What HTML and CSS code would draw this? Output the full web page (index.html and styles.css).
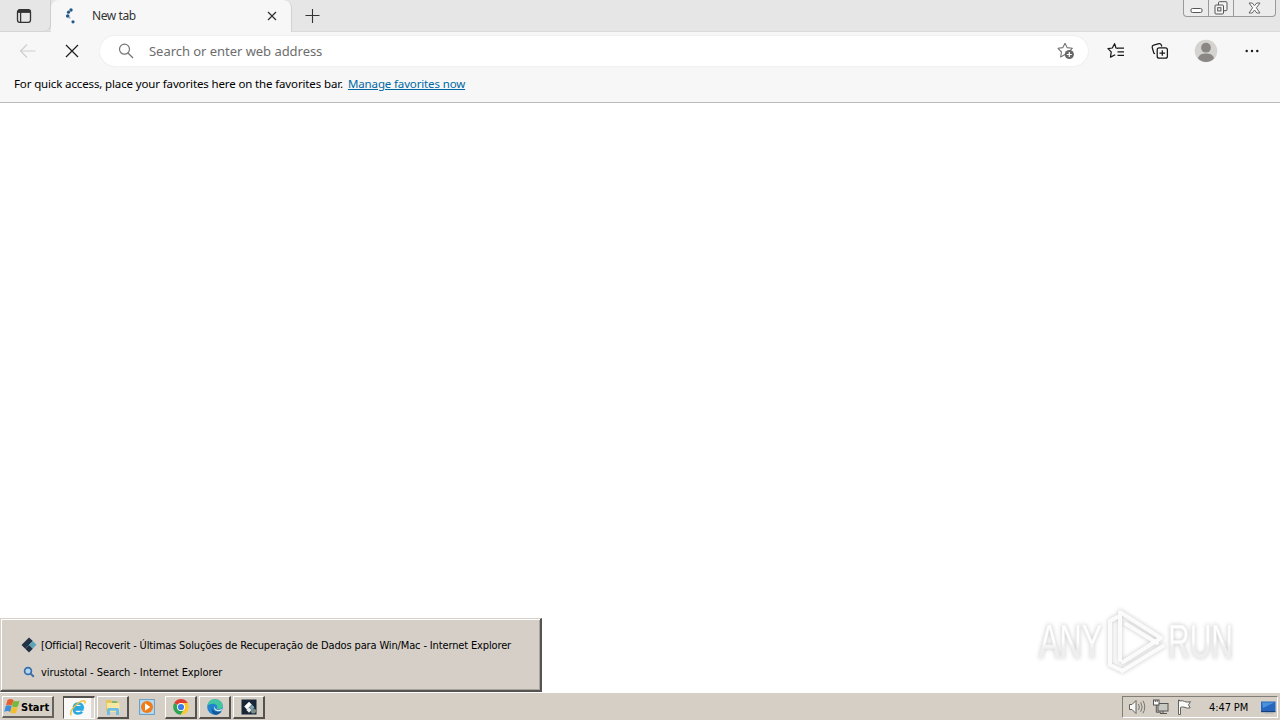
FILE: index.html
```html
<!DOCTYPE html>
<html lang="en">
<head>
<meta charset="utf-8">
<title>New tab</title>
<link rel="stylesheet" href="styles.css">
</head>
<body>
<div class="desktop">
  <header class="tabstrip">
    <div class="tab-actions">
      <svg width="16" height="16" viewBox="0 0 16 16" fill="none" stroke="#333" stroke-width="1.3"><rect x="1.5" y="1.7" width="13" height="12.6" rx="2.2"/><path d="M2 3.4h12" stroke-width="3"/><path d="M4.6 4v10"/></svg>
    </div>
    <div class="tab">
      <svg class="spinner" width="14" height="18" viewBox="0 0 14 18" fill="#235987"><circle cx="6" cy="3" r="1.7"/><circle cx="3.5" cy="5.2" r="1.6"/><circle cx="2.7" cy="9" r="1.8"/><circle cx="4.5" cy="10.7" r="1" fill="#8ba9c2"/><circle cx="8" cy="14.8" r="1.6"/></svg>
      <span class="tab-title">New tab</span>
      <svg class="tab-close" width="10" height="10" viewBox="0 0 10 10" fill="none" stroke="#333" stroke-width="1.3"><path d="M1 1l8 8M9 1L1 9"/></svg>
    </div>
    <svg class="new-tab" width="16" height="16" viewBox="0 0 16 16" fill="none" stroke="#333" stroke-width="1.1"><path d="M.5 7.5h14M7.5 1v14"/></svg>
    <div class="window-buttons">
      <span class="wb wb-min"><svg width="13" height="7" viewBox="0 0 13 7"><rect x="1" y="1.5" width="11" height="4" rx="1.4" fill="#fff" stroke="#555"/></svg></span>
      <span class="wb wb-max"><svg width="14" height="14" viewBox="0 0 14 14" fill="#f4f4f4" stroke="#555"><rect x="4.5" y=".7" width="8.5" height="9" rx="1"/><rect x="1" y="4" width="8.5" height="9" rx="1"/><rect x="3.7" y="6.7" width="3.2" height="3.2"/></svg></span>
      <span class="wb wb-close"><svg width="13" height="12" viewBox="0 0 13 12"><path d="M1 1h3.2l2.3 2.7L8.8 1H12L8.4 5.8 12 11H8.8L6.5 8 4.2 11H1l3.6-5.2z" fill="#fafafa" stroke="#666"/></svg></span>
    </div>
  </header>

  <section class="chrome">
    <div class="toolbar">
      <svg class="back" width="18" height="16" viewBox="0 0 18 16" fill="none" stroke="#cfcfcf" stroke-width="1.2"><path d="M16.5 8h-15M8 1.5L1.5 8 8 14.5"/></svg>
      <svg class="stop" width="14" height="14" viewBox="0 0 14 14" fill="none" stroke="#1c1c1c" stroke-width="1.2"><path d="M1 1l12 12M13 1L1 13"/></svg>
      <div class="address">
        <svg width="16" height="16" viewBox="0 0 16 16" fill="none" stroke="#757575" stroke-width="1.2"><circle cx="6.5" cy="6.2" r="5"/><path d="M10 10l5 5"/></svg>
        <span class="placeholder">Search or enter web address</span>
        <svg class="add-fav" width="18" height="18" viewBox="0 0 18 18"><path d="M8 1.2l2.1 4.4 5.2.7-3.6 3.5M8 12.5L3.6 15l.9-5L1 6.3l4.9-.7L8 1.2" fill="none" stroke="#747474" stroke-width="1.1" stroke-linejoin="round"/><circle cx="12.3" cy="12.5" r="4.6" fill="#666"/><path d="M12.3 10v5M9.8 12.5h5" stroke="#fff" stroke-width="1.2"/></svg>
      </div>
      <div class="tools">
        <svg width="18" height="18" viewBox="0 0 18 18" fill="none" stroke="#181818" stroke-width="1.25" stroke-linejoin="round"><path d="M11 6.3L9 6 7.6 1.7 5.3 6 1 6.6l3.2 3.3-.7 5.2 4.7-2.3"/><path d="M10.5 6.2H17M10.5 9.8H17M10.5 13.3H17"/></svg>
        <svg width="18" height="18" viewBox="0 0 18 18" fill="none" stroke="#181818" stroke-width="1.25" stroke-linejoin="round"><path d="M4 11.8l-1.1-.6L1.2 5.5Q.9 3.6 2.6 3.2L8 1.6q1.6-.3 2.3 1.3l.5 1.6"/><rect x="6.2" y="5.8" width="10.2" height="10.4" rx="2"/><path d="M11.3 8.2v5.6M8.5 11h5.6"/></svg>
        <svg class="avatar" width="24" height="24" viewBox="0 0 24 24"><circle cx="12" cy="12" r="11.3" fill="#d5d3d0"/><circle cx="12" cy="8.7" r="4.9" fill="#8b8784"/><path d="M4 19.5C5 15.7 8 14.6 12 14.6s7 1.1 8 4.9A11 11 0 0 1 12 23a11 11 0 0 1-8-3.5z" fill="#8b8784"/></svg>
        <svg width="16" height="4" viewBox="0 0 16 4" fill="#181818"><circle cx="2.7" cy="2" r="1.2"/><circle cx="8" cy="2" r="1.2"/><circle cx="13.3" cy="2" r="1.2"/></svg>
      </div>
    </div>
    <div class="favorites">
      <span class="fav-text">For quick access, place your favorites here on the favorites bar.</span>
      <a class="fav-link">Manage favorites now</a>
    </div>
  </section>

  <main class="page"></main>

  <div class="watermark">
    <svg width="214" height="72" viewBox="0 0 214 72">
      <defs><linearGradient id="fade" x1="0" y1="0" x2="0" y2="1"><stop offset=".5" stop-color="#fff"/><stop offset=".62" stop-color="#eee"/></linearGradient></defs>
      <g class="mark-text" fill="url(#fade)"><text transform="translate(5 53) scale(.64 1)">ANY</text><text transform="translate(134 53) scale(.625 1)">RUN</text></g>
      <g class="mark-play"><path d="M83 12l-7 4v44l11 5"/><path d="M86 55V7l41 26-38 24"/><path d="M92 19l31 19M88 66l41-25"/></g>
    </svg>
  </div>

  <div class="window-list">
    <div class="window-item">
      <svg width="16" height="16" viewBox="0 0 16 16"><path d="M8 .5L.5 8l3.7 3.7L11.8 4z" fill="#213244"/><path d="M11.8 4l3.7 3.8-3.7 3.8L8 8z" fill="#5ba5b8"/><path d="M8 8l3.8 3.8L8 15.5l-3.8-3.8z" fill="#203044"/></svg>
      <span class="item-official">[Official] Recoverit - Últimas Soluções de Recuperação de Dados para Win/Mac - Internet Explorer</span>
    </div>
    <div class="window-item">
      <svg width="16" height="16" viewBox="0 0 16 16" fill="#b5d5ef" stroke="#356fa8" stroke-width="1.7"><circle cx="7" cy="7" r="3.4"/><path d="M9.6 9.6l3.2 3.2" stroke-width="2"/></svg>
      <span class="item-search">virustotal - Search - Internet Explorer</span>
    </div>
  </div>

  <footer class="taskbar">
    <div class="start">
      <svg width="18" height="17" viewBox="0 0 18 17"><path d="M4.500 2q3-2 6 0L9 7.500q-3-1.600-6 0z" fill="#e65f2c"/><path d="M10.700 2.500q2.800 1.700 6 0L15 8.300q-2.800 1.800-6 0z" fill="#76b83a"/><path d="M2.700 8q3-1.600 6 0L7.200 14q-3-1.900-6 0z" fill="#3e8edb"/><path d="M8.800 8.700q3 1.700 6 0l-1.500 5.900q-3 1.800-6 0z" fill="#f4bd2e"/></svg>
      <span>Start</span>
    </div>
    <div class="tasks">
      <div class="task task-active"><svg width="18" height="18" viewBox="0 0 18 18" fill="none"><path d="M14.600 10.400H4.800q.2 4.200 4.300 4.200 2.600 0 4-1.800M4.800 8.200Q5.400 4.400 9.400 4.400q3.800 0 4.400 3.800H5" stroke="#2da9e1" stroke-width="2.500"/><path d="M2.400 16.300C-.5 13 6 5 12.500 2.200c3.200-1.300 4.300.1 3.200 2.400" stroke="#edbf35" stroke-width="1.400"/></svg></div>
      <div class="task"><svg width="18" height="18" viewBox="0 0 18 18"><path d="M2 2h5l1 1.500h7V14H2z" fill="#e8c65e"/><path d="M3 5h12.500v9H3z" fill="#f7e7a3"/><path d="M8 4h5" stroke="#61b16c" stroke-width="1.500"/><path d="M3 17v-5.500q0-1.500 1.500-1.500h9q1.500 0 1.500 1.500V17h-3v-4.200H6V17z" fill="#70bde4"/></svg></div>
      <div class="task task-flat"><svg width="18" height="18" viewBox="0 0 18 18"><rect x="1.6" y="1.6" width="14.8" height="14.8" fill="#b8dcf4" stroke="#649dc5"/><circle cx="9" cy="9" r="6" fill="#f17b16"/><path d="M7 5.3l5.300 3.700L7 12.700z" fill="#fff"/></svg></div>
      <div class="task"><svg width="18" height="18" viewBox="0 0 18 18"><circle cx="9" cy="9" r="7.8" fill="#e7e7e7"/><path d="M9 9L2.200 5.100A7.800 7.800 0 0 1 15.800 5.100H9z" fill="#df3e31"/><path d="M9 9l-6.800-3.900A7.800 7.800 0 0 0 8.800 16.800L12.400 11z" fill="#2fa452"/><path d="M9 5.100h6.800A7.800 7.800 0 0 1 8.800 16.800L12.400 11z" fill="#fbc82e"/><circle cx="9" cy="9" r="4" fill="#fff"/><circle cx="9" cy="9" r="3.1" fill="#3e7de6"/></svg></div>
      <div class="task"><svg width="18" height="18" viewBox="0 0 18 18"><circle cx="9" cy="9" r="7.8" fill="#2384ce"/><path d="M1.500 7.500C2 3 5.500 1.200 9 1.200c4.800 0 7.800 3 7.800 6.600 0 3.300-4.300 4.500-6.300 2.800 1.200-1 1.100-3.800-1.700-4.600C5.800 5.100 3 6.200 1.500 7.500z" fill="#43c5a1"/><path d="M7 7.200c-2.800 4.200 1 7.400 8.400 6.200A7.800 7.800 0 0 1 9 16.800C5.700 16 4.500 9.900 7 7.200z" fill="#145899"/><path d="M8.800 8.200c-.6 3.400 3.200 4.700 7.700 2.900l-1.200 1.700c-4.700 1.500-8.600-1.200-6.500-4.600z" fill="#e3edf0"/></svg></div>
      <div class="task"><svg width="18" height="18" viewBox="0 0 18 18"><rect x="1.5" y="1.5" width="15" height="15" fill="#182638"/><path d="M9 3.800L4.200 8.600 7 11.400l4.800-4.800z" fill="#fff"/><path d="M12 6.800l2.500 2.500-2.500 2.600-2.600-2.600z" fill="#7ba7b5"/><path d="M9 9.400l2.700 2.700L9 14.800l-2.600-2.700z" fill="#e9eef0"/><circle cx="13.5" cy="13" r="2.6" fill="#778c88"/></svg></div>
    </div>
    <div class="tray">
      <svg width="18" height="18" viewBox="0 0 18 18" fill="#f8f8f6" stroke="#62625f"><path d="M1.500 6.500H4l4-4v13l-4-4H1.500z"/><path d="M10.500 6q1.800 3 0 6M12.700 4.200q3 4.800 0 9.600M15 2.700q3.500 6.300 0 12.600" fill="none" stroke="#777"/></svg>
      <svg width="18" height="18" viewBox="0 0 18 18" fill="#fff" stroke="#555"><rect x="6" y="5.500" width="10" height="7.500" fill="#c9c9c4"/><path d="M8 15.500h7M11 13v2.500" fill="none"/><rect x="1.500" y="2" width="5.500" height="5"/><path d="M3.300 2v2M5.200 2v2M4.300 7v7.200h5" fill="none"/></svg>
      <svg class="flag" width="18" height="18" viewBox="0 0 18 18" fill="#fafaf8" stroke="#62625f"><path d="M2.500 16.500V2h1v1q3-1 5 .5 2.500 1.200 6 .2l-2 3.200 1.700 3q-3.200.7-5.200-.5-2.500-1-4.500 0v7.100z"/></svg>
      <span class="clock">4:47 PM</span>
      <svg width="17" height="16" viewBox="0 0 17 16"><path d="M1 2.500h14.500V12H1z" fill="#2766bf"/><path d="M2 3.400h12.500L3 9z" fill="#4a91de"/><path d="M1 12h14.500v1.200H1z" fill="#173e75"/><path d="M5 14h8" stroke="#a1abb3"/></svg>
    </div>
  </footer>
</div>
</body>
</html>
```
FILE: styles.css
```css
* { box-sizing: border-box; }
body { margin: 0; }
svg { display: block; flex: none; }
.desktop {
  position: relative;
  display: flex;
  flex-direction: column;
  width: 1280px;
  height: 720px;
  overflow: hidden;
  background: #fff;
  color: #000;
  font-family: "Noto Sans", "Open Sans", sans-serif;
  white-space: nowrap;
}
.tabstrip {
  display: flex;
  align-items: center;
  height: 32px;
  background: linear-gradient(#e6e6e6, #e6e6e6) 0 0 / 100% 31px no-repeat #f7f7f7;
  border-bottom: 1px solid #dadada;
}
.tab-actions {
  width: 51px;
  height: 32px;
  padding: 8px 0 0 16px;
  border-right: 1px solid #cecece;
  border-bottom: 1px solid #d5d5d5;
  border-radius: 0 0 7px 0;
}
.tab {
  display: flex;
  align-items: center;
  width: 241px;
  height: 32px;
  padding: 0 14px;
  background: #f7f7f7;
  border-right: 1px solid #d2d2d2;
  border-radius: 8px 8px 0 0;
}
.tab-title { margin-left: 13px; font-size: 12px; letter-spacing: -.4px; color: #333; }
.tab-close { margin-left: auto; }
.new-tab { margin-left: 13px; }
.window-buttons {
  display: flex;
  align-self: flex-start;
  width: 93px;
  height: 17px;
  margin: 0 4px 0 auto;
  border: 1px solid #9a9a9a;
  border-top: 0;
  border-radius: 0 0 4px 4px;
  background: #ececec;
}
.wb { display: flex; align-items: center; justify-content: center; width: 25px; border-right: 1px solid #9a9a9a; }
.wb-min { padding-top: 5px; }
.wb-close { width: 41px; border-right: 0; }
.chrome { height: 71px; background: #f7f7f7; border-bottom: 1px solid #b9b9b9; }
.toolbar { display: flex; align-items: center; height: 38px; padding-left: 19px; }
.stop { margin-left: 28px; }
.address {
  display: flex;
  align-items: center;
  width: 988px;
  height: 30px;
  margin-left: 21px;
  padding: 0 13px 0 18px;
  background: #fff;
  border-radius: 15px;
  box-shadow: 0 0 2px #e1e1e1;
}
.placeholder { margin-left: 15px; font-size: 13px; letter-spacing: -.04px; color: #6d6d6d; }
.add-fav { margin-left: auto; }
.tools { display: flex; align-items: center; margin-left: 19px; }
.tools svg + svg { margin-left: 26px; }
.tools svg + .avatar { margin-left: 25px; }
.favorites { display: flex; height: 30px; padding-left: 14px; font-size: 11.5px; line-height: 28px; }
.fav-text { width: 334px; letter-spacing: -.135px; }
.fav-link { color: #0068a5; text-decoration: underline; letter-spacing: -.14px; }
.page { flex: 1; background: #fff; }
.watermark { position: absolute; left: 1034px; top: 605px; filter: drop-shadow(0 0 2px #c6c6c6); }
.mark-text { stroke: #f2f2f2; stroke-width: .6px; font-family: "Liberation Sans", sans-serif; font-size: 48px; }
.mark-play { fill: none; stroke: #fbfbfb; stroke-width: 4px; stroke-linejoin: round; stroke-linecap: round; }
.window-list {
  position: absolute;
  left: 0;
  top: 618px;
  width: 542px;
  height: 74px;
  padding: 13px 20px;
  background: #d5cfc8;
  border: 1px solid #d5cfc8;
  border-right: 2px solid #555451;
  border-bottom: 2px solid #555451;
  box-shadow: inset 1px 1px #fff, inset -1px -1px #aaa59f;
  font-family: "DejaVu Sans Condensed", "DejaVu Sans", sans-serif;
  font-size: 11px;
}
.window-item { display: flex; align-items: center; height: 27px; gap: 4px; }
.window-item svg { margin-top: -2px; }
.item-official { letter-spacing: -.14px; }
.item-search { letter-spacing: -.07px; }
.taskbar {
  display: flex;
  align-items: center;
  height: 28px;
  padding: 2px 2px 1px;
  background: #d5cfc6;
  border-top: 1px solid #fff;
  font-family: "DejaVu Sans Condensed", "DejaVu Sans", sans-serif;
}
.start {
  display: flex;
  align-items: center;
  width: 52px;
  height: 22px;
  border: 1px solid #fff;
  border-right: 2px solid #66625d;
  border-bottom: 2px solid #66625d;
  font-size: 11px;
  font-weight: bold;
}
.start span { padding-top: 2px; }
.tasks { display: flex; gap: 2px; margin-left: 9px; }
.task {
  display: flex;
  align-items: center;
  justify-content: center;
  width: 32px;
  height: 23px;
  border: 1px solid #fff;
  border-right: 2px solid #55514c;
  border-bottom: 2px solid #55514c;
}
.task-active { padding-right: 3px; background: #faf9f7; border: 1px solid #fff; border-top: 2px solid #55514c; border-left: 1px solid #55514c; box-shadow: inset -3px 0 #ddd9d3; }
.task-flat { border-color: transparent; }
.tray {
  display: flex;
  align-items: center;
  width: 156px;
  height: 22px;
  margin-left: auto;
  padding-left: 5px;
  border: 1px solid #fff;
  border-top-color: #817d77;
  border-left-color: #817d77;
}
.tray svg + svg { margin-left: 6px; }
.clock { width: 51px; margin-left: 15px; font-size: 11px; letter-spacing: -.1px; }
```
